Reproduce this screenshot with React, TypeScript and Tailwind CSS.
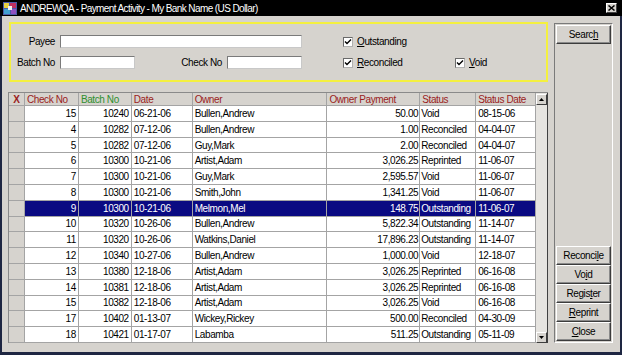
import React from 'react';

type Row = {
  check: string;
  batch: string;
  date: string;
  owner: string;
  amount: string;
  status: string;
  statusDate: string;
  selected?: boolean;
};

const rows: Row[] = [
  { check: '15', batch: '10240', date: '06-21-06', owner: 'Bullen,Andrew', amount: '50.00', status: 'Void', statusDate: '08-15-06' },
  { check: '4', batch: '10282', date: '07-12-06', owner: 'Bullen,Andrew', amount: '1.00', status: 'Reconciled', statusDate: '04-04-07' },
  { check: '5', batch: '10282', date: '07-12-06', owner: 'Guy,Mark', amount: '2.00', status: 'Reconciled', statusDate: '04-04-07' },
  { check: '6', batch: '10300', date: '10-21-06', owner: 'Artist,Adam', amount: '3,026.25', status: 'Reprinted', statusDate: '11-06-07' },
  { check: '7', batch: '10300', date: '10-21-06', owner: 'Guy,Mark', amount: '2,595.57', status: 'Void', statusDate: '11-06-07' },
  { check: '8', batch: '10300', date: '10-21-06', owner: 'Smith,John', amount: '1,341.25', status: 'Void', statusDate: '11-06-07' },
  { check: '9', batch: '10300', date: '10-21-06', owner: 'Melmon,Mel', amount: '148.75', status: 'Outstanding', statusDate: '11-06-07', selected: true },
  { check: '10', batch: '10320', date: '10-26-06', owner: 'Bullen,Andrew', amount: '5,822.34', status: 'Outstanding', statusDate: '11-14-07' },
  { check: '11', batch: '10320', date: '10-26-06', owner: 'Watkins,Daniel', amount: '17,896.23', status: 'Outstanding', statusDate: '11-14-07' },
  { check: '12', batch: '10340', date: '10-27-06', owner: 'Bullen,Andrew', amount: '1,000.00', status: 'Void', statusDate: '12-18-07' },
  { check: '13', batch: '10380', date: '12-18-06', owner: 'Artist,Adam', amount: '3,026.25', status: 'Reprinted', statusDate: '06-16-08' },
  { check: '14', batch: '10381', date: '12-18-06', owner: 'Artist,Adam', amount: '3,026.25', status: 'Reprinted', statusDate: '06-16-08' },
  { check: '15', batch: '10382', date: '12-18-06', owner: 'Artist,Adam', amount: '3,026.25', status: 'Void', statusDate: '06-16-08' },
  { check: '17', batch: '10402', date: '01-13-07', owner: 'Wickey,Rickey', amount: '500.00', status: 'Reconciled', statusDate: '04-30-09' },
  { check: '18', batch: '10421', date: '01-17-07', owner: 'Labamba', amount: '511.25', status: 'Outstanding', statusDate: '05-11-09' },
];

function Input({ w }: { w: string }) {
  return <div className={`${w} h-[13px] bg-white border border-t-[#7a7a7a] border-l-[#7a7a7a] border-b-[#c8c8c8] border-r-[#c8c8c8]`} />;
}

function Check({ children, w }: { children: React.ReactNode; w?: string }) {
  return (
    <div className={`flex items-center ${w ?? ''}`}>
      <div className="w-[10px] h-[10px] bg-white border border-t-[#6a6a6a] border-l-[#6a6a6a] border-b-[#b0b0b0] border-r-[#b0b0b0] flex items-center justify-center">
        <svg width="8" height="8" viewBox="0 0 8 8">
          <path d="M1 3.5 L3 5.5 L7 1.5" stroke="#000" strokeWidth="1.4" fill="none" />
        </svg>
      </div>
      <span className="ml-[4px]">{children}</span>
    </div>
  );
}

function Button({ children }: { children: React.ReactNode }) {
  return (
    <div className="h-[19px] mx-[1px] flex items-center justify-center bg-[#d6d3ce] border border-t-white border-l-white border-b-[#3c3c3c] border-r-[#3c3c3c] shadow-[inset_-1px_-1px_0_#8a8a8a]">
      {children}
    </div>
  );
}

function ScrollArrow({ up }: { up?: boolean }) {
  return (
    <div className="w-[11px] h-[11px] bg-[#d6d3ce] border border-t-white border-l-white border-b-[#3c3c3c] border-r-[#3c3c3c] flex items-center justify-center">
      <svg width="5" height="3" viewBox="0 0 5 3">
        <path d={up ? 'M2.5 0 L5 3 L0 3 Z' : 'M0 0 L5 0 L2.5 3 Z'} fill="#000" />
      </svg>
    </div>
  );
}

const cols = ['w-[16px]', 'w-[54px]', 'w-[53px]', 'w-[61px]', 'w-[135px]', 'w-[93px]', 'w-[56px]', 'w-[60px]'];
const cell = 'h-full flex items-center border-r border-[#a4a4a4] whitespace-nowrap overflow-hidden';

export default function App() {
  return (
    <div className="w-[622px] h-[355px] flex flex-col overflow-hidden font-['Liberation_Sans',Arial,sans-serif] text-[10px] tracking-[-0.4px] text-black">
      <div className="h-[16px] bg-black flex items-center shrink-0">
        <svg width="14" height="13" viewBox="0 0 14 13" className="ml-[3px]">
          <rect x="0" y="0" width="14" height="13" fill="#4a5aa8" />
          <rect x="1" y="1" width="5" height="5" fill="#e8d040" />
          <rect x="7" y="1" width="6" height="5" fill="#c03060" />
          <rect x="1" y="7" width="6" height="5" fill="#40a0d0" />
          <rect x="8" y="7" width="5" height="5" fill="#9050c0" />
          <rect x="5" y="4" width="4" height="4" fill="#f0f0f0" />
        </svg>
        <span className="ml-[3px] text-white tracking-[-0.6px]">ANDREWQA - Payment Activity - My Bank Name (US Dollar)</span>
        <div className="ml-auto mr-[5px] w-[11px] h-[10px] bg-[#d6d3ce] border border-t-white border-l-white border-b-[#404040] border-r-[#404040] flex items-center justify-center">
          <svg width="7" height="6" viewBox="0 0 7 6">
            <path d="M0.5 0.5 L6.5 5.5 M6.5 0.5 L0.5 5.5" stroke="#000" strokeWidth="1.5" />
          </svg>
        </div>
      </div>

      <div className="flex-1 flex bg-[#d6d3ce] border-l-2 border-r-2 border-b-[3px] border-[#1e2642] pl-[6px]">
        <div className="w-[540px] flex flex-col">
          <div className="mt-[6px] ml-[1px] w-[539px] h-[60px] border-2 border-[#f4f040] pt-[11px]">
            <div className="flex items-center h-[13px]">
              <div className="w-[44px] text-right">Payee</div>
              <div className="ml-[5px]"><Input w="w-[242px]" /></div>
              <div className="ml-[41px]">
                <Check><u>O</u>utstanding</Check>
              </div>
            </div>
            <div className="flex items-center h-[13px] mt-[8px]">
              <div className="w-[44px] text-right">Batch No</div>
              <div className="ml-[5px]"><Input w="w-[75px]" /></div>
              <div className="w-[87px] text-right">Check No</div>
              <div className="ml-[5px]"><Input w="w-[75px]" /></div>
              <div className="ml-[41px] flex">
                <Check w="w-[112px]"><u>R</u>econciled</Check>
                <Check><u>V</u>oid</Check>
              </div>
            </div>
          </div>

          <div className="mt-[10px] h-[251px] flex border-t border-l border-[#8a8a8a]">
            <div className="w-[527px] flex flex-col">
              <div className="h-[13px] flex border-b border-[#a4a4a4] bg-[#d6d3ce] text-[#9a1c1c]">
                <div className={`${cols[0]} ${cell} justify-center font-bold`}>X</div>
                <div className={`${cols[1]} ${cell} pl-[2px]`}>Check No</div>
                <div className={`${cols[2]} ${cell} pl-[2px] text-[#2e8f2e]`}>Batch No</div>
                <div className={`${cols[3]} ${cell} pl-[2px]`}>Date</div>
                <div className={`${cols[4]} ${cell} pl-[2px]`}>Owner</div>
                <div className={`${cols[5]} ${cell} pl-[2px]`}>Owner Payment</div>
                <div className={`${cols[6]} ${cell} pl-[2px]`}>Status</div>
                <div className={`${cols[7]} ${cell} pl-[2px]`}>Status Date</div>
              </div>
              {rows.map((r, i) => {
                const bg = r.selected ? 'bg-[#0a0a82] text-white' : 'bg-white';
                return (
                  <div key={i} className="h-[15.8px] flex border-b border-[#a4a4a4]">
                    <div className={`${cols[0]} ${cell} bg-[#d6d3ce]`} />
                    <div className={`${cols[1]} ${cell} ${bg} justify-end pr-[2px]`}>{r.check}</div>
                    <div className={`${cols[2]} ${cell} ${bg} justify-end pr-[2px]`}>{r.batch}</div>
                    <div className={`${cols[3]} ${cell} ${bg} pl-[2px]`}>{r.date}</div>
                    <div className={`${cols[4]} ${cell} ${bg} pl-[2px]`}>{r.owner}</div>
                    <div className={`${cols[5]} ${cell} ${bg} justify-end pr-[1px]`}>{r.amount}</div>
                    <div className={`${cols[6]} ${cell} ${bg} pl-[1px]`}>{r.status}</div>
                    <div className={`${cols[7]} ${cell} ${bg} pl-[2px]`}>{r.statusDate}</div>
                  </div>
                );
              })}
            </div>
            <div className="w-[12px] flex flex-col justify-between bg-[#e6e4e0] border-r border-[#404040] pt-[1px]">
              <ScrollArrow up />
              <ScrollArrow />
            </div>
          </div>
        </div>

        <div className="ml-[6px] mt-[7px] w-[59px] h-[320px] flex flex-col justify-between border border-t-[#7a7a7a] border-l-[#7a7a7a] border-b-white border-r-white py-[1px]">
          <Button>Searc<u>h</u></Button>
          <div className="flex flex-col">
            <Button>Reconci<u>l</u>e</Button>
            <Button>Vo<u>i</u>d</Button>
            <Button>Regis<u>t</u>er</Button>
            <Button><u>R</u>eprint</Button>
            <Button><u>C</u>lose</Button>
          </div>
        </div>
      </div>
    </div>
  );
}
